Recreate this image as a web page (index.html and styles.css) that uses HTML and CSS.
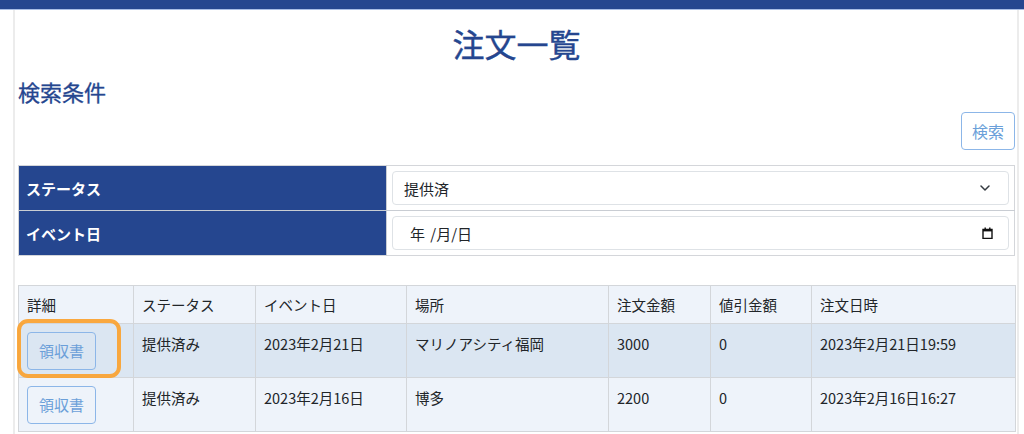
FILE: index.html
```html
<!DOCTYPE html>
<html lang="ja">
<head>
<meta charset="utf-8">
<title>注文一覧</title>
<link rel="stylesheet" href="styles.css">
</head>
<body>
<header class="topbar"></header>
<main class="page">
  <h1 class="title">注文一覧</h1>
  <h2 class="subtitle">検索条件</h2>
  <div class="actions">
    <button class="btn-outline btn-search" type="button">検索</button>
  </div>
  <table class="search">
    <tr>
      <th class="search-label">ステータス</th>
      <td class="search-field">
        <div class="control">
          <span class="control-text">提供済</span>
          <svg class="chevron" width="12" height="8" viewBox="0 0 12 8"><path d="M2 2l4 4 4-4" fill="none" stroke="#343a40" stroke-width="1.5" stroke-linecap="round" stroke-linejoin="round"/></svg>
        </div>
      </td>
    </tr>
    <tr>
      <th class="search-label">イベント日</th>
      <td class="search-field">
        <div class="control">
          <span class="control-text date-text">年 /月/日</span>
          <svg class="calendar" width="11" height="12" viewBox="0 0 11 12"><path d="M1 2.5h9v9h-9z" fill="none" stroke="#111" stroke-width="1.4"/><rect x="1" y="2" width="9" height="2.4" fill="#111"/><rect x="2.5" y="0.5" width="1.4" height="2" fill="#111"/><rect x="7.1" y="0.5" width="1.4" height="2" fill="#111"/></svg>
        </div>
      </td>
    </tr>
  </table>

  <table class="orders">
    <colgroup>
      <col class="c1"><col class="c2"><col class="c3"><col class="c4"><col class="c5"><col class="c6"><col class="c7">
    </colgroup>
    <thead>
      <tr>
        <th>詳細</th><th>ステータス</th><th>イベント日</th><th>場所</th><th>注文金額</th><th>値引金額</th><th>注文日時</th>
      </tr>
    </thead>
    <tbody>
      <tr class="active">
        <td><div class="mark-wrap"><button class="btn-outline" type="button">領収書</button><span class="mark"></span></div></td>
        <td>提供済み</td><td>2023年2月21日</td><td>マリノアシティ福岡</td><td>3000</td><td>0</td><td>2023年2月21日19:59</td>
      </tr>
      <tr>
        <td><button class="btn-outline" type="button">領収書</button></td>
        <td>提供済み</td><td>2023年2月16日</td><td>博多</td><td>2200</td><td>0</td><td>2023年2月16日16:27</td>
      </tr>
    </tbody>
  </table>
</main>
</body>
</html>
```

FILE: styles.css
```css
* { box-sizing: border-box; }

html, body {
  margin: 0;
  padding: 0;
  background: #ffffff;
}

body {
  font-family: "Noto Sans CJK JP", "Noto Sans", sans-serif;
  color: #212529;
  font-size: 15px;
  overflow: hidden;
}

.topbar {
  height: 10px;
  background: #25468f;
  border-bottom: 1px solid #a9bde5;
}

.page {
  margin-left: 13px;
  width: 1006px;
  min-height: calc(100vh - 10px);
  border-left: 2px solid #ececec;
  border-right: 2px solid #ececec;
  padding: 0 2px 0 3px;
  overflow: hidden;
}

.title {
  margin: 13px 0 0;
  font-size: 32px;
  line-height: 40px;
  font-weight: 400;
  color: #25468f;
  text-align: center;
  -webkit-text-stroke: 0.4px #25468f;
}

.subtitle {
  margin: 14px 0 0;
  font-size: 22px;
  line-height: 28px;
  font-weight: 400;
  color: #25468f;
  -webkit-text-stroke: 0.3px #25468f;
}

.actions {
  display: flex;
  justify-content: flex-end;
  margin-top: 7px;
}

.btn-outline {
  font-family: inherit;
  font-size: 15px;
  line-height: 24px;
  padding: 6px 11px;
  color: #6b9fd9;
  background: transparent;
  border: 1px solid #8cb6e8;
  border-radius: 4px;
  cursor: pointer;
}

.btn-search {
  font-size: 16px;
  padding: 6px 10px;
}

.search {
  margin-top: 15px;
  width: 100%;
  border-collapse: collapse;
  border: 1px solid #d4d6da;
}

.search tr + tr { border-top: 1px solid #c9cdd3; }

.search-label {
  width: 368px;
  background: #25468f;
  color: #ffffff;
  text-align: left;
  font-weight: 700;
  font-size: 15px;
  padding: 0 7px;
  border-right: 1px solid #c9cdd3;
}

.search-field {
  padding: 5px;
}

.control {
  height: 34px;
  border: 1px solid #dee2e6;
  border-radius: 4px;
  display: flex;
  align-items: center;
  justify-content: space-between;
  padding: 0 15px 0 11px;
  font-size: 15px;
}

.date-text {
  padding-left: 6px;
  word-spacing: 2px;
}

.chevron { margin-right: 2px; }

.orders {
  margin-top: 29px;
  width: 100%;
  border-collapse: collapse;
  table-layout: fixed;
  border: 1px solid #d3d6da;
}

.c1 { width: 115px; }
.c2 { width: 122px; }
.c3 { width: 151px; }
.c4 { width: 202px; }
.c5 { width: 102px; }
.c6 { width: 101px; }
.c7 { width: 204px; }

.orders th,
.orders td {
  border: 1px solid #d3d6da;
  text-align: left;
  padding: 8px 8px;
  font-size: 14.5px;
  line-height: 21px;
  vertical-align: top;
}

.orders th {
  font-weight: 400;
  background: #eef3fa;
  vertical-align: middle;
}

.orders td {
  background: #eef3fa;
  padding-top: 9px;
  line-height: 22px;
}

.orders tr.active td { background: #dbe6f2; }

.orders td:first-child { padding: 8px 8px 7px 8px; }

.mark-wrap {
  position: relative;
  display: inline-block;
}

.mark {
  position: absolute;
  left: -10px;
  top: -13px;
  right: -25px;
  bottom: -8px;
  border: 4px solid #fba02a;
  border-radius: 11px;
  opacity: 0.9;
  pointer-events: none;
}
```
